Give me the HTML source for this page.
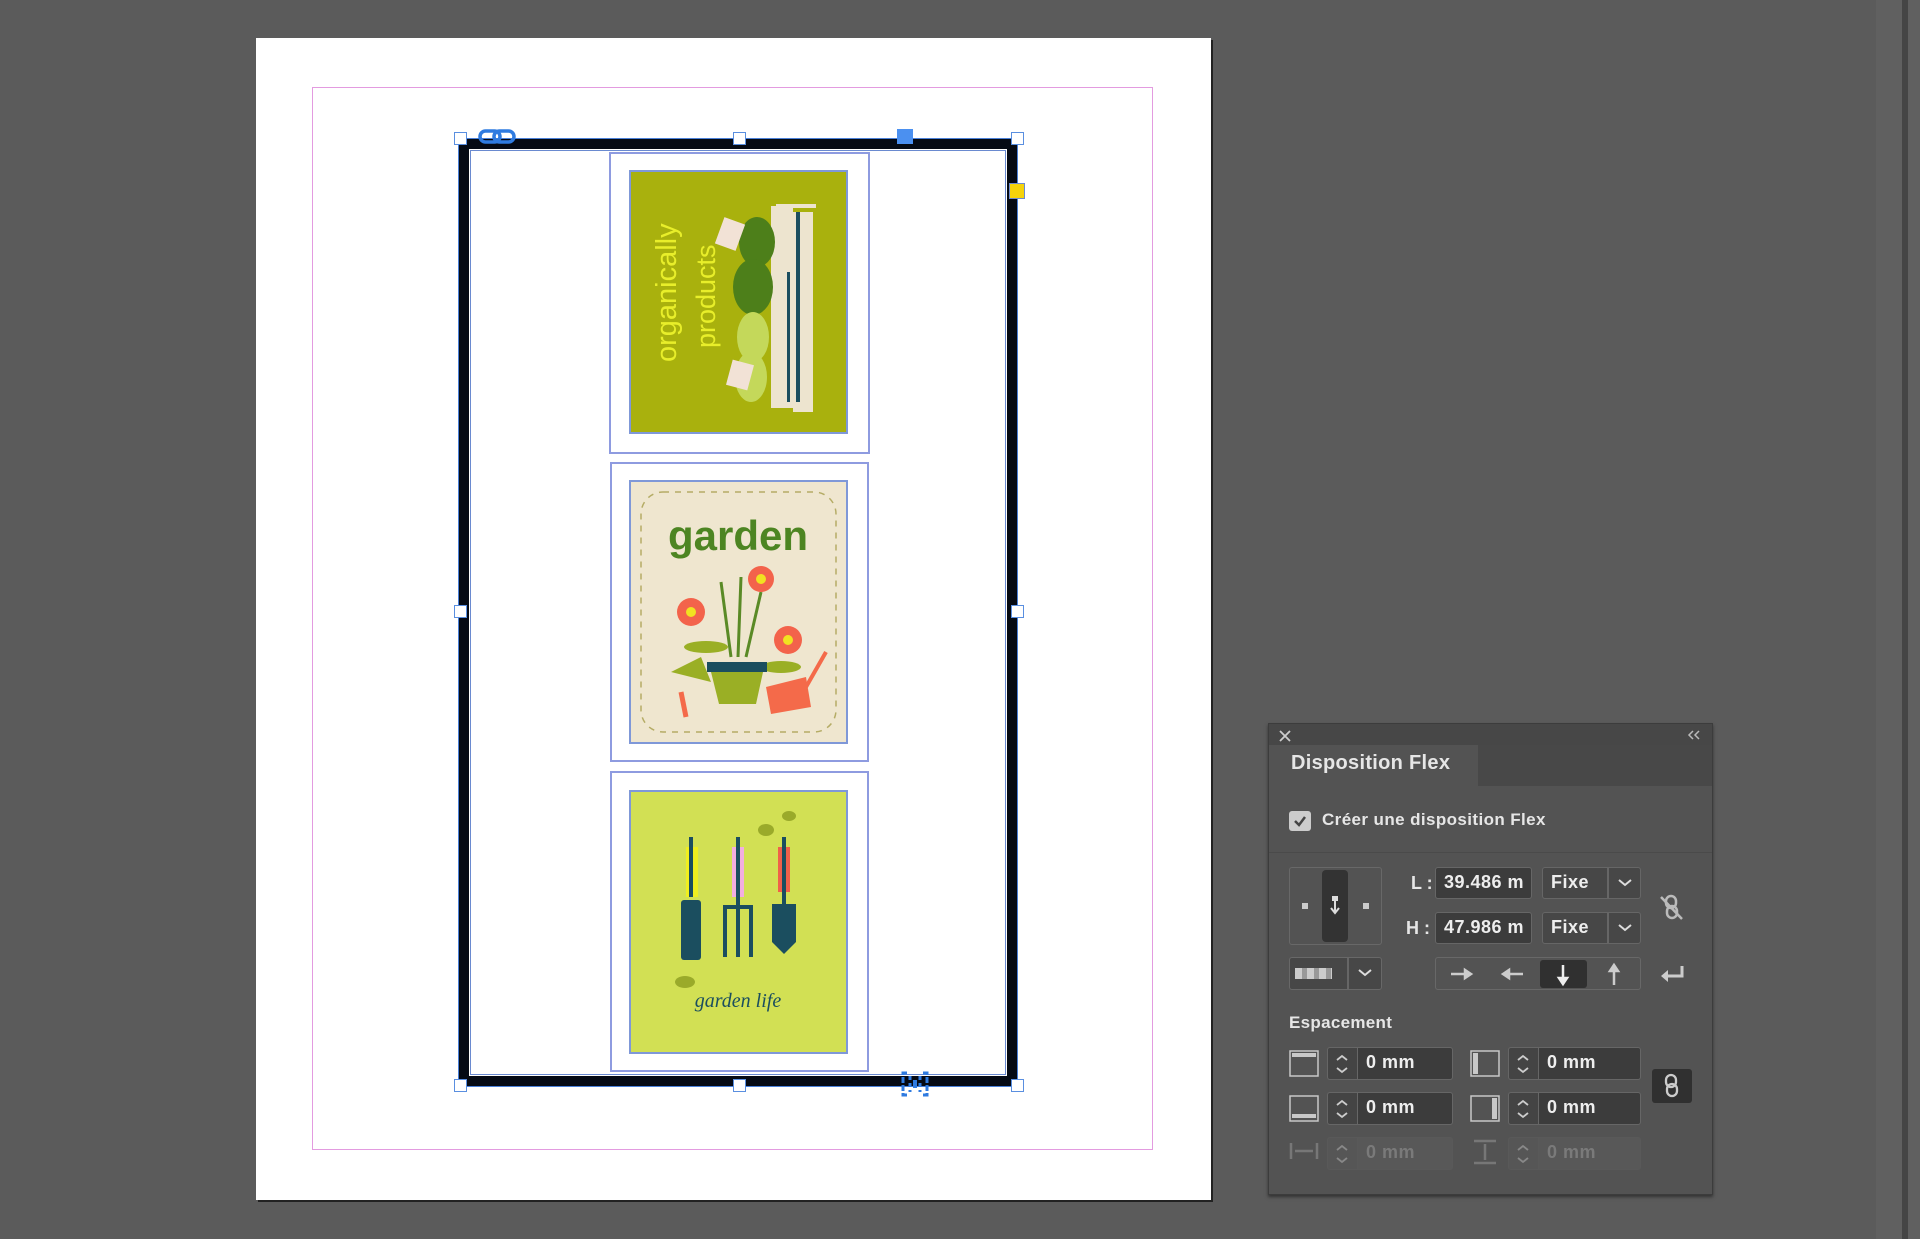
<!DOCTYPE html>
<html><head><meta charset="utf-8"><style>
*{margin:0;padding:0;box-sizing:border-box}
body{width:1920px;height:1239px;background:#5b5b5b;position:relative;overflow:hidden;font-family:"Liberation Sans",sans-serif}
.a{position:absolute}
.h{position:absolute;width:13px;height:13px;background:#fff;border:1.5px solid #5a8fe0}
.card{position:absolute;border:2px solid #8e9be0;background:#fff}
.img{position:absolute;border:2px solid #7f98d8}
.pt{color:#e6e6e6;font-weight:bold}
.box{position:absolute;border:1.5px solid #686868;border-radius:3px}
.inp{position:absolute;background:#3c3c3c;border:1.5px solid #666;border-radius:3px;color:#eee;font-size:18px;font-weight:bold;padding-left:8px;line-height:29px;letter-spacing:0.5px}
.st{position:absolute;background:#444;border:1.5px solid #666;border-right:none;border-radius:3px 0 0 3px}
.st svg{position:absolute;left:6px;top:5px}
.dis{background:#565656;border-color:#595959}
</style></head><body>
<div class="a" style="left:1876px;top:0;width:44px;height:1239px;background:#606060"></div>
<div class="a" style="left:1902px;top:0;width:6px;height:1239px;background:#454545"></div>
<div class="a" style="left:256px;top:38px;width:955px;height:1162px;background:#fff;box-shadow:2px 2px 0 #222"></div>
<div class="a" style="left:312px;top:87px;width:841px;height:1063px;border:1px solid #e39be0"></div>
<div class="a" style="left:459px;top:139px;width:558px;height:947px;border:10px solid #050a14;outline:1.5px solid #4a80d8"></div>
<div class="a" style="left:470px;top:150px;width:536px;height:925px;border:1px solid #6a8ad0"></div>

<div class="card" style="left:609px;top:152px;width:261px;height:302px"></div>
<div class="img" style="left:629px;top:170px;width:219px;height:264px;background:#a9b10d;overflow:hidden">
<svg width="215" height="260" viewBox="0 0 215 260">
<rect x="140" y="34" width="22" height="202" fill="#ede4cf"/><rect x="162" y="40" width="20" height="200" fill="#ede4cf"/><rect x="145" y="32" width="40" height="4" fill="#ede4cf"/>
<rect x="165" y="40" width="4" height="190" fill="#1b4e5f"/><rect x="156" y="100" width="3" height="130" fill="#1b4e5f"/>
<ellipse cx="126" cy="70" rx="18" ry="25" fill="#4d7f1a"/><ellipse cx="122" cy="115" rx="20" ry="28" fill="#4d7f1a"/>
<ellipse cx="122" cy="165" rx="16" ry="25" fill="#c4d85a"/><ellipse cx="120" cy="205" rx="16" ry="25" fill="#c4d85a"/>
<rect x="88" y="48" width="22" height="28" fill="#f2e2d6" transform="rotate(20 99 62)"/><rect x="98" y="190" width="22" height="26" fill="#f2e2d6" transform="rotate(15 109 203)"/>
<text transform="translate(45 190) rotate(-90)" font-size="29" fill="#e8ee2a" font-family="Liberation Sans">organically</text>
<text transform="translate(84 176) rotate(-90)" font-size="27" fill="#e8ee2a" font-family="Liberation Sans">products</text>
</svg></div>

<div class="card" style="left:610px;top:462px;width:259px;height:300px"></div>
<div class="img" style="left:629px;top:480px;width:219px;height:264px;background:#efe6cf;overflow:hidden">
<svg width="215" height="260" viewBox="0 0 215 260">
<rect x="10" y="10" width="195" height="240" rx="22" fill="none" stroke="#b5ac66" stroke-dasharray="6 6" stroke-width="1.5"/>
<text x="107" y="68" text-anchor="middle" font-size="42" font-weight="bold" fill="#4d8522" font-family="Liberation Sans">garden</text>
<path d="M90 100 L100 175 M110 95 L107 175 M130 110 L115 175" stroke="#5a8a26" stroke-width="3"/>
<circle cx="130" cy="97" r="13" fill="#f3634b"/><circle cx="130" cy="97" r="5" fill="#f1e221"/>
<circle cx="60" cy="130" r="14" fill="#f3634b"/><circle cx="60" cy="130" r="5" fill="#f1e221"/>
<circle cx="157" cy="158" r="14" fill="#f3634b"/><circle cx="157" cy="158" r="5" fill="#f1e221"/>
<ellipse cx="75" cy="165" rx="22" ry="6" fill="#9aaf25"/><ellipse cx="150" cy="185" rx="20" ry="6" fill="#9aaf25"/>
<path d="M40 190 L70 175 L80 200 Z" fill="#9aaf25"/>
<rect x="76" y="180" width="60" height="10" fill="#1b4e5f"/><path d="M80 190 L132 190 L125 222 L88 222 Z" fill="#9aaf25"/>
<path d="M135 205 L175 195 L180 225 L140 232 Z" fill="#f46a4a"/><path d="M175 205 L195 170" stroke="#f46a4a" stroke-width="4"/>
<path d="M50 210 L55 235" stroke="#f46a4a" stroke-width="5"/>
</svg></div>

<div class="card" style="left:610px;top:771px;width:259px;height:301px"></div>
<div class="img" style="left:629px;top:790px;width:219px;height:264px;background:#d2e054;overflow:hidden">
<svg width="215" height="260" viewBox="0 0 215 260">
<ellipse cx="135" cy="38" rx="8" ry="6" fill="#9aaa2a"/><ellipse cx="158" cy="24" rx="7" ry="5" fill="#9aaa2a"/><ellipse cx="54" cy="190" rx="10" ry="6" fill="#9aaa2a"/>
<rect x="55" y="55" width="12" height="50" fill="#f0ef1e"/><rect x="50" y="108" width="20" height="60" rx="3" fill="#1b4e5f"/><rect x="58" y="45" width="4" height="60" fill="#1b4e5f"/>
<rect x="101" y="55" width="12" height="50" fill="#f2aee0"/><path d="M92 115 H122 M94 115 V165 M107 115 V165 M120 115 V165" stroke="#1b4e5f" stroke-width="4" fill="none"/><rect x="105" y="45" width="4" height="70" fill="#1b4e5f"/>
<rect x="147" y="55" width="12" height="45" fill="#f0604a"/><path d="M141 112 H165 V150 L153 162 L141 150 Z" fill="#1b4e5f"/><rect x="151" y="45" width="4" height="68" fill="#1b4e5f"/>
<text x="107" y="215" text-anchor="middle" font-size="20" font-style="italic" fill="#1b4e5f" font-family="Liberation Serif">garden life</text>
</svg></div>

<div class="h" style="left:454px;top:132px"></div><div class="h" style="left:733px;top:132px"></div><div class="h" style="left:1011px;top:132px"></div>
<div class="h" style="left:454px;top:605px"></div><div class="h" style="left:1011px;top:605px"></div>
<div class="h" style="left:454px;top:1079px"></div><div class="h" style="left:733px;top:1079px"></div><div class="h" style="left:1011px;top:1079px"></div>
<div class="a" style="left:897px;top:129px;width:16px;height:15px;background:#4b90f0"></div>
<div class="a" style="left:1009px;top:183px;width:16px;height:16px;background:#f5d30a;border:1px solid #6a8ad0"></div>
<svg class="a" style="left:478px;top:127px" width="40" height="20"><rect x="2" y="4" width="20" height="11" rx="5.5" fill="none" stroke="#2f7be0" stroke-width="3.5"/><rect x="16" y="4" width="20" height="11" rx="5.5" fill="none" stroke="#2f7be0" stroke-width="3.5"/></svg>
<svg class="a" style="left:900px;top:1070px" width="30" height="28"><path d="M7 3 H3 V25 H7 M23 3 H27 V25 H23" fill="none" stroke="#2f7be0" stroke-width="3" stroke-dasharray="6 2"/><path d="M10 6 V22 M20 6 V22" stroke="#2f7be0" stroke-width="3" stroke-dasharray="4 3"/><rect x="13" y="10" width="4" height="8" fill="#2f7be0"/></svg>

<div class="a" style="left:1268px;top:723px;width:445px;height:472px;background:#535353;border:1px solid #3c3c3c;box-shadow:0 2px 3px #333"></div>
<div class="a" style="left:1269px;top:724px;width:443px;height:21px;background:#474747"></div>
<div class="a" style="left:1478px;top:745px;width:234px;height:41px;background:#484848"></div>
<svg class="a" style="left:1278px;top:729px" width="14" height="14"><path d="M2 2 L12 12 M12 2 L2 12" stroke="#ccc" stroke-width="1.8"/></svg>
<svg class="a" style="left:1686px;top:729px" width="16" height="12"><path d="M7 2 L3 6 L7 10 M13 2 L9 6 L13 10" stroke="#bbb" stroke-width="1.5" fill="none"/></svg>
<div class="a pt" style="left:1291px;top:752px;font-size:20px;letter-spacing:0.3px">Disposition Flex</div>
<div class="a" style="left:1289px;top:811px;width:22px;height:20px;background:#ccc;border-radius:3px"></div>
<svg class="a" style="left:1292px;top:813px" width="16" height="16"><path d="M3 8 L7 12 L13 4" stroke="#444" stroke-width="2.5" fill="none"/></svg>
<div class="a pt" style="left:1322px;top:810px;font-size:17px;letter-spacing:0.4px">Créer une disposition Flex</div>
<div class="a" style="left:1269px;top:852px;width:443px;height:1px;background:#4a4a4a"></div>
<div class="box" style="left:1289px;top:867px;width:93px;height:78px"></div>
<div class="a" style="left:1322px;top:870px;width:26px;height:72px;background:#333;border-radius:4px"></div>
<div class="a" style="left:1302px;top:903px;width:6px;height:6px;background:#ccc"></div>
<div class="a" style="left:1363px;top:903px;width:6px;height:6px;background:#ccc"></div>
<svg class="a" style="left:1327px;top:895px" width="16" height="22"><rect x="5" y="1" width="6" height="5" fill="#ddd"/><path d="M8 6 V18 M4 13 L8 18 L12 13" stroke="#ddd" stroke-width="2" fill="none"/></svg>
<div class="a pt" style="left:1411px;top:873px;font-size:18px">L :</div>
<div class="a pt" style="left:1406px;top:918px;font-size:18px">H :</div>
<div class="inp" style="left:1435px;top:867px;width:97px;height:32px">39.486 m</div>
<div class="inp" style="left:1435px;top:912px;width:97px;height:32px">47.986 m</div>
<div class="inp" style="left:1542px;top:867px;width:99px;height:32px;background:#474747">Fixe</div>
<div class="inp" style="left:1542px;top:912px;width:99px;height:32px;background:#474747">Fixe</div>
<div class="a" style="left:1607px;top:868px;width:1.5px;height:30px;background:#666"></div>
<div class="a" style="left:1607px;top:913px;width:1.5px;height:30px;background:#666"></div>
<svg class="a" style="left:1615px;top:875px" width="20" height="60"><path d="M4 5 L10 10 L16 5 M4 50 L10 55 L16 50" stroke="#ddd" stroke-width="2" fill="none"/></svg>
<svg class="a" style="left:1658px;top:893px" width="28" height="30"><rect x="8" y="3" width="10" height="12" rx="5" fill="none" stroke="#bbb" stroke-width="2.5"/><rect x="9" y="13" width="10" height="12" rx="5" fill="none" stroke="#bbb" stroke-width="2.5"/><path d="M3 4 L24 26" stroke="#bbb" stroke-width="2.5"/></svg>
<div class="box" style="left:1289px;top:957px;width:93px;height:33px;background:#474747"></div>
<div class="a" style="left:1347px;top:958px;width:1.5px;height:31px;background:#666"></div>
<div class="a" style="left:1295px;top:968px;width:37px;height:11px;background:repeating-linear-gradient(90deg,#ccc 0 7px,#999 7px 12px)"></div>
<svg class="a" style="left:1355px;top:965px" width="20" height="16"><path d="M4 5 L10 10 L16 5" stroke="#ddd" stroke-width="2" fill="none"/></svg>
<div class="box" style="left:1435px;top:957px;width:206px;height:33px"></div>
<div class="a" style="left:1540px;top:960px;width:47px;height:28px;background:#303030;border-radius:3px"></div>
<svg class="a" style="left:1435px;top:957px" width="206" height="33"><g stroke="#ccc" stroke-width="2.5" fill="#ccc"><path d="M16 17 H36"/><path d="M36 17 L30 13 V21 Z"/><path d="M68 17 H88"/><path d="M68 17 L74 13 V21 Z"/><path d="M128 8 V26" stroke="#eee"/><path d="M128 27 L124 21 H132 Z" fill="#eee" stroke="#eee"/><path d="M179 11 V28"/><path d="M179 8 L175 14 H183 Z"/></g></svg>
<svg class="a" style="left:1658px;top:962px" width="28" height="24"><path d="M24 4 V14 H6" stroke="#ccc" stroke-width="3" fill="none"/><path d="M3 14 L10 8 V20 Z" fill="#ccc"/></svg>
<div class="a pt" style="left:1289px;top:1013px;font-size:17px;letter-spacing:0.3px">Espacement</div>
<svg class="a" style="left:1289px;top:1048px" width="32" height="135"><g fill="none" stroke="#c8c8c8" stroke-width="1.5"><rect x="1" y="3" width="28" height="25"/><rect x="1" y="48" width="28" height="25"/></g><rect x="3" y="5" width="24" height="4" fill="#c8c8c8"/><rect x="3" y="66" width="24" height="4" fill="#c8c8c8"/><g stroke="#777" stroke-width="2.5" fill="none"><path d="M2 95 V111 M28 95 V111 M6 103 H24"/></g></svg>
<svg class="a" style="left:1470px;top:1048px" width="32" height="135"><g fill="none" stroke="#c8c8c8" stroke-width="1.5"><rect x="1" y="3" width="28" height="25"/><rect x="1" y="48" width="28" height="25"/></g><rect x="3" y="5" width="5" height="21" fill="#c8c8c8"/><rect x="22" y="50" width="5" height="21" fill="#c8c8c8"/><g stroke="#777" stroke-width="2.5" fill="none"><path d="M4 93 H26 M4 115 H26 M15 96 V112"/></g></svg>

<div class="st" style="left:1327px;top:1047px;width:30px;height:33px"><svg width="16" height="22"><path d="M3 7 L8 3 L13 7 M3 15 L8 19 L13 15" stroke="#ccc" stroke-width="1.8" fill="none"/></svg></div>
<div class="inp" style="left:1357px;top:1047px;width:96px;height:33px;border-radius:0 3px 3px 0">0 mm</div>
<div class="st" style="left:1327px;top:1092px;width:30px;height:33px"><svg width="16" height="22"><path d="M3 7 L8 3 L13 7 M3 15 L8 19 L13 15" stroke="#ccc" stroke-width="1.8" fill="none"/></svg></div>
<div class="inp" style="left:1357px;top:1092px;width:96px;height:33px;border-radius:0 3px 3px 0">0 mm</div>
<div class="st dis" style="left:1327px;top:1137px;width:30px;height:33px"><svg width="16" height="22"><path d="M3 7 L8 3 L13 7 M3 15 L8 19 L13 15" stroke="#888" stroke-width="1.8" fill="none"/></svg></div>
<div class="inp" style="left:1357px;top:1137px;width:96px;height:33px;border-radius:0 3px 3px 0;background:#585858;border-color:#595959;color:#7a7a7a">0 mm</div>

<div class="st" style="left:1508px;top:1047px;width:30px;height:33px"><svg width="16" height="22"><path d="M3 7 L8 3 L13 7 M3 15 L8 19 L13 15" stroke="#ccc" stroke-width="1.8" fill="none"/></svg></div>
<div class="inp" style="left:1538px;top:1047px;width:103px;height:33px;border-radius:0 3px 3px 0">0 mm</div>
<div class="st" style="left:1508px;top:1092px;width:30px;height:33px"><svg width="16" height="22"><path d="M3 7 L8 3 L13 7 M3 15 L8 19 L13 15" stroke="#ccc" stroke-width="1.8" fill="none"/></svg></div>
<div class="inp" style="left:1538px;top:1092px;width:103px;height:33px;border-radius:0 3px 3px 0">0 mm</div>
<div class="st dis" style="left:1508px;top:1137px;width:30px;height:33px"><svg width="16" height="22"><path d="M3 7 L8 3 L13 7 M3 15 L8 19 L13 15" stroke="#888" stroke-width="1.8" fill="none"/></svg></div>
<div class="inp" style="left:1538px;top:1137px;width:103px;height:33px;border-radius:0 3px 3px 0;background:#585858;border-color:#595959;color:#7a7a7a">0 mm</div>

<div class="a" style="left:1652px;top:1069px;width:40px;height:34px;background:#303030;border-radius:3px"></div>
<svg class="a" style="left:1662px;top:1073px" width="20" height="26"><rect x="4" y="2" width="10" height="12" rx="5" fill="none" stroke="#ccc" stroke-width="2.3"/><rect x="5" y="11" width="10" height="12" rx="5" fill="none" stroke="#ccc" stroke-width="2.3"/></svg>
</body></html>
